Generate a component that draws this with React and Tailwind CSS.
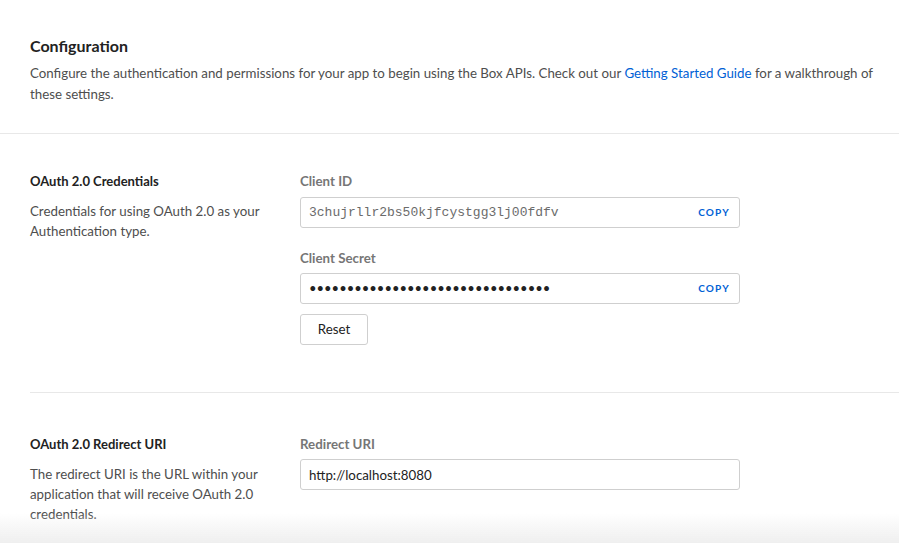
import React from 'react'

const CLIENT_ID = '3chujrllr2bs50kjfcystgg3lj00fdfv'
const SECRET_DOTS = '•'.repeat(32)

function CopyField({ value, mono }) {
  return (
    <div className="flex h-[31px] w-[440px] items-center rounded-[3px] border border-[#cfcfcf] bg-white pl-[8px] pr-[9px]">
      <span
        className={
          mono
            ? "flex-1 font-['Liberation_Mono',monospace] text-[13px] text-[#6b6b6b]"
            : 'flex-1 text-[13px] text-[#222]'
        }
      >
        {value}
      </span>
      <button className="text-[10px] font-bold tracking-[1.2px] text-[#0061d5]">COPY</button>
    </div>
  )
}

function Section({ title, desc, children, pt, pb, border }) {
  return (
    <div className={`ml-[30px] flex ${pt} ${pb} ${border ? 'border-b border-[#e8e8e8]' : ''}`}>
      <div className="w-[270px] shrink-0 pr-[30px]">
        <h3 className="text-[13px] font-bold leading-[20px] text-[#222]">{title}</h3>
        <p className="mt-[10px] text-[13.3px] leading-[20px] text-[#4e4e4e]">{desc}</p>
      </div>
      <div className="flex flex-col">{children}</div>
    </div>
  )
}

function Label({ children, className = '' }) {
  return (
    <div className={`text-[13.3px] font-bold leading-[20px] text-[#767676] ${className}`}>{children}</div>
  )
}

export default function App() {
  return (
    <div className="relative min-h-[543px] bg-white font-['Lato','Noto_Sans',sans-serif] text-[#222]">
      {/* header */}
      <div className="border-b border-[#e8e8e8] pl-[30px] pr-[20px] pb-[28px] pt-[35px]">
        <h1 className="text-[16px] font-bold leading-[22px] text-[#222]">Configuration</h1>
        <p className="mt-[6px] text-[13.3px] leading-[21px] text-[#4e4e4e]">
          Configure the authentication and permissions for your app to begin using the Box APIs. Check out our{' '}
          <a className="text-[#0061d5]">Getting Started Guide</a> for a walkthrough of these settings.
        </p>
      </div>

      <Section
        title="OAuth 2.0 Credentials"
        desc="Credentials for using OAuth 2.0 as your Authentication type."
        pt="pt-[37px]"
        pb="pb-[47px]"
        border
      >
        <Label>Client ID</Label>
        <div className="mt-[6px]">
          <CopyField value={CLIENT_ID} mono />
        </div>
        <Label className="mt-[20px]">Client Secret</Label>
        <div className="mt-[5px]">
          <CopyField value={SECRET_DOTS} />
        </div>
        <div className="mt-[10px]">
          <button className="h-[31px] w-[68px] rounded-[3px] border border-[#cfcfcf] bg-white text-[13.3px] text-[#222]">
            Reset
          </button>
        </div>
      </Section>

      <Section
        title="OAuth 2.0 Redirect URI"
        desc="The redirect URI is the URL within your application that will receive OAuth 2.0 credentials."
        pt="pt-[41px]"
        pb="pb-[30px]"
      >
        <Label>Redirect URI</Label>
        <div className="mt-[5px]">
          <input
            readOnly
            value="http://localhost:8080"
            className="h-[31px] w-[440px] rounded-[3px] border border-[#cfcfcf] bg-white px-[8px] text-[13.3px] text-[#222] outline-none"
          />
        </div>
      </Section>

      {/* bottom fade */}
      <div className="pointer-events-none fixed bottom-0 left-0 right-0 h-[30px] bg-gradient-to-b from-white/0 to-[#efefef]" />
    </div>
  )
}
